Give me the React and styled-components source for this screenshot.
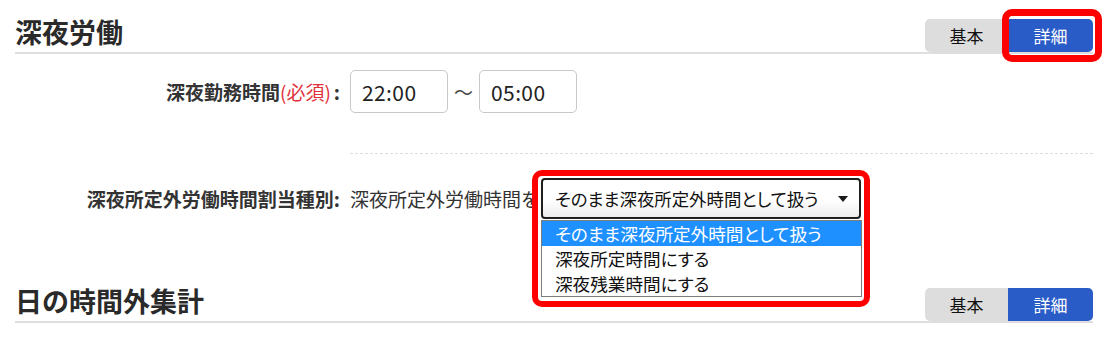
import React from 'react';
import styled, { createGlobalStyle } from 'styled-components';

const GlobalStyle = createGlobalStyle`
  html, body { margin: 0; padding: 0; background: #fff; }
  body {
    font-family: "Noto Sans CJK JP", "Noto Sans", sans-serif;
    color: #333;
  }
`;

const Page = styled.div`
  width: 1116px;
  box-sizing: border-box;
  padding: 0 23px 0 15px;
`;

const Section = styled.section`
  margin-top: ${(p) => p.$top || 0}px;
`;

const SectionHeader = styled.div`
  display: flex;
  justify-content: space-between;
  align-items: flex-end;
  height: 33px;
  padding-top: 19px;
  border-bottom: 2px solid #dedede;
`;

const Heading = styled.h2`
  margin: 0 0 4px 0;
  font-size: 27px;
  line-height: 33px;
  font-weight: 700;
  color: #2a2a2a;
`;

const ToggleGroup = styled.div`
  display: flex;
`;

const ToggleWrap = styled.div`
  position: relative;
`;

const ToggleButton = styled.button`
  width: ${(p) => (p.$active ? 85 : 83)}px;
  height: 33px;
  border: none;
  margin: 0;
  padding: 0;
  font-family: inherit;
  font-size: 17px;
  cursor: pointer;
  background: ${(p) => (p.$active ? '#2a5cc8' : '#dddddd')};
  color: ${(p) => (p.$active ? '#fff' : '#111')};
  border-radius: ${(p) => (p.$active ? '0 5px 5px 0' : '5px 0 0 5px')};
`;

const Highlight = styled.div`
  position: absolute;
  box-sizing: border-box;
  border: ${(p) => p.$w}px solid #ff0000;
  border-radius: 10px;
  pointer-events: none;
  z-index: 20;
`;

const FormRow = styled.div`
  display: grid;
  grid-template-columns: 325px 1fr;
  column-gap: 10px;
`;

const Label = styled.div`
  text-align: right;
  font-size: 19px;
  font-weight: 700;
  color: #333;
  white-space: nowrap;
  padding-top: ${(p) => p.$pt}px;
  line-height: ${(p) => p.$lh}px;
`;

const Required = styled.span`
  color: #e0313b;
  font-weight: 400;
`;

const Colon = styled.span`
  margin-left: ${(p) => p.$gap || 0}px;
`;

const ValueCell = styled.div`
  display: flex;
  align-items: center;
  padding-top: ${(p) => p.$pt}px;
  padding-bottom: ${(p) => p.$pb}px;
  border-bottom: ${(p) => (p.$sep ? '1px dashed #dcdcdc' : 'none')};
`;

const TimeInput = styled.input`
  width: 98px;
  height: 43px;
  box-sizing: border-box;
  border: 1px solid #c8c8c8;
  border-radius: 5px;
  padding: 0 0 0 11px;
  font-family: "Noto Sans CJK JP", sans-serif;
  font-size: 21px;
  letter-spacing: 0.4px;
  color: #222;
  outline: none;
`;

const Tilde = styled.span`
  font-size: 19px;
  color: #444;
  margin: 0 6px;
`;

const InlineText = styled.span`
  font-size: 19px;
  color: #333;
  white-space: nowrap;
  margin-right: 1px;
`;

const SelectWrap = styled.div`
  position: relative;
`;

const SelectBox = styled.div`
  width: 320px;
  height: 41px;
  box-sizing: border-box;
  border: 2px solid #1f1f1f;
  border-radius: 4px;
  padding: 0 11px 0 12px;
  display: flex;
  align-items: center;
  justify-content: space-between;
  font-size: 17.4px;
  font-feature-settings: "palt";
  color: #111;
  background: linear-gradient(#ffffff 55%, #ececec);
`;

const OptionList = styled.ul`
  position: absolute;
  top: 42px;
  left: 0;
  width: 321px;
  box-sizing: border-box;
  margin: 0;
  padding: 0;
  list-style: none;
  background: #fff;
  border: 1px solid #7d7d7d;
  z-index: 10;
`;

const Option = styled.li`
  height: 25px;
  line-height: 25px;
  padding-left: 13px;
  font-size: 17.6px;
  font-feature-settings: "palt";
  white-space: nowrap;
  background: ${(p) => (p.$selected ? '#1e90ff' : '#fff')};
  color: ${(p) => (p.$selected ? '#fff' : '#111')};
`;

const Arrow = () => (
  <svg width="10" height="6" viewBox="0 0 10 6" aria-hidden="true">
    <polygon points="0,0 10,0 5,6" fill="#1a1a1a" />
  </svg>
);

const Toggle = ({ highlight }) => (
  <ToggleGroup>
    <ToggleButton>基本</ToggleButton>
    <ToggleWrap>
      <ToggleButton $active>詳細</ToggleButton>
      {highlight && (
        <Highlight $w={7} style={{ top: -10, left: -6, right: -9, bottom: -10 }} />
      )}
    </ToggleWrap>
  </ToggleGroup>
);

const options = [
  'そのまま深夜所定外時間として扱う',
  '深夜所定時間にする',
  '深夜残業時間にする',
];

export default function App() {
  return (
    <Page>
      <GlobalStyle />
      <Section>
        <SectionHeader>
          <Heading>深夜労働</Heading>
          <Toggle highlight />
        </SectionHeader>

        <FormRow>
          <Label $pt={16} $lh={43}>
            深夜勤務時間<Required>(必須)</Required>
            <Colon $gap={3}>:</Colon>
          </Label>
          <ValueCell $pt={16} $pb={40} $sep>
            <TimeInput defaultValue="22:00" readOnly />
            <Tilde>～</Tilde>
            <TimeInput defaultValue="05:00" readOnly />
          </ValueCell>
        </FormRow>

        <FormRow>
          <Label $pt={24} $lh={41}>
            深夜所定外労働時間割当種別<Colon>:</Colon>
          </Label>
          <ValueCell $pt={24} $pb={0}>
            <InlineText>深夜所定外労働時間を</InlineText>
            <SelectWrap>
              <SelectBox>
                <span>{options[0]}</span>
                <Arrow />
              </SelectBox>
              <OptionList>
                {options.map((o, i) => (
                  <Option key={o} $selected={i === 0}>
                    {o}
                  </Option>
                ))}
              </OptionList>
              <Highlight $w={6} style={{ top: -8, left: -9, width: 338, height: 137 }} />
            </SelectWrap>
          </ValueCell>
        </FormRow>
      </Section>

      <Section $top={50}>
        <SectionHeader>
          <Heading>日の時間外集計</Heading>
          <Toggle />
        </SectionHeader>
      </Section>
    </Page>
  );
}
